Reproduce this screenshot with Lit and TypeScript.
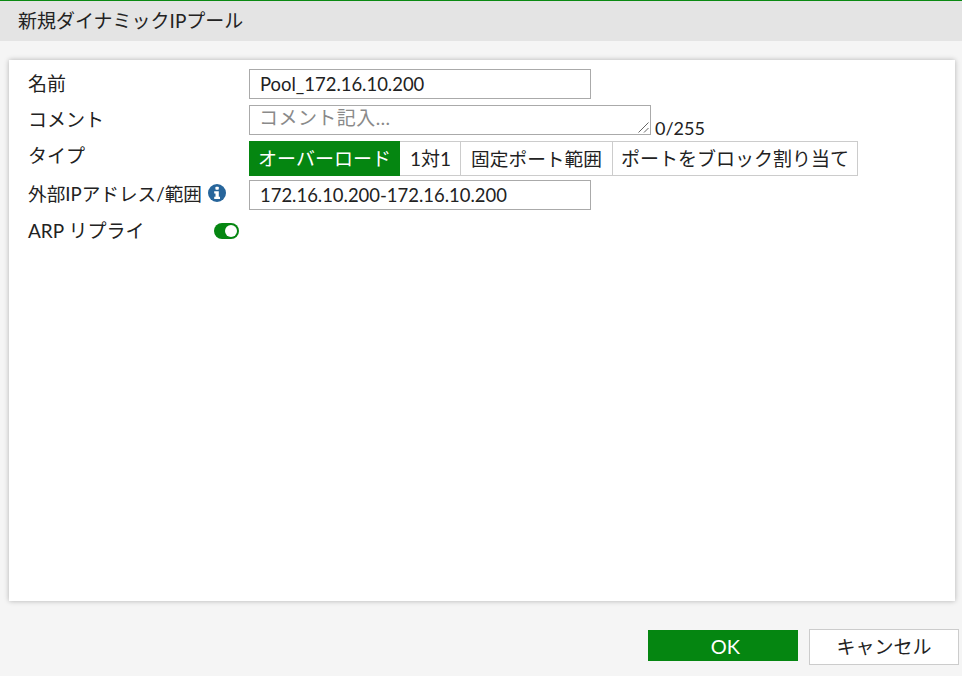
import { LitElement, html, css } from "lit";
import { customElement } from "lit/decorators.js";

@customElement("app-root")
export class AppRoot extends LitElement {
  static styles = css`
    :host {
      display: flex;
      flex-direction: column;
      width: 962px;
      height: 676px;
      box-sizing: border-box;
      background: #f5f5f5;
      color: #222;
      font-family: "Lato", "Noto Sans CJK JP", sans-serif;
      font-size: 19px;
      overflow: hidden;
    }
    .title {
      height: 41px;
      box-sizing: border-box;
      border-top: 1px solid #0a8a12;
      background: #e4e4e4;
      padding: 0 0 1px 18px;
      display: flex;
      align-items: center;
      line-height: 38px;
      flex: none;
    }
    .card {
      margin: 19px 7px 0 9px;
      height: 541px;
      box-sizing: border-box;
      background: #fff;
      box-shadow: 0 0 5px rgba(0, 0, 0, 0.28);
      padding: 9px 19px;
      flex: none;
    }
    .row {
      display: flex;
      align-items: center;
    }
    .label {
      width: 221px;
      flex: none;
      display: flex;
      align-items: center;
      line-height: 30px;
      white-space: nowrap;
    }
    .r1 { height: 30px; margin-bottom: 6px; }
    .r2 { height: 30px; margin-bottom: 6px; align-items: flex-start; }
    .r3 { height: 35px; margin-bottom: 4px; }
    .r3 .label { position: relative; top: -3px; }
    .r4 .label { font-size: 18.65px; position: relative; top: -1px; }
    .r5 { height: 30px; margin-top: 5px; }
    .r5 .label { justify-content: space-between; padding-right: 10px; box-sizing: border-box; }
    input, textarea {
      font: inherit;
      color: inherit;
      box-sizing: border-box;
      background: #fff;
      border: 1px solid #aaa;
      border-radius: 0;
      outline: none;
      margin: 0;
    }
    input {
      width: 342px;
      height: 30px;
      padding: 0 10px;
      font-size: 18.45px;
    }
    .ta { position: relative; width: 402px; height: 30px; flex: none; }
    textarea {
      width: 402px;
      height: 30px;
      padding: 1px 9px 0;
      line-height: 22px;
      display: block;
      resize: none;
    }
    textarea::placeholder { color: #8a8a8a; opacity: 1; letter-spacing: 0.45px; }
    .grip {
      position: absolute;
      right: 2px;
      bottom: 2px;
      width: 11px;
      height: 11px;
      pointer-events: none;
    }
    .count {
      align-self: flex-end;
      margin-left: 4px;
      line-height: 20px;
      position: relative;
      top: 3px;
      font-size: 18px;
    }
    .seg { display: flex; height: 35px; }
    .seg div {
      box-sizing: border-box;
      height: 35px;
      display: flex;
      align-items: center;
      justify-content: center;
      border: 1px solid #ccc;
      border-left: none;
      background: #fff;
      white-space: nowrap;
      padding-bottom: 3px;
    }
    .seg div.on {
      background: #058611;
      border: none;
      color: #fff;
    }
    .seg .fix { font-size: 18.7px; }
    .seg .one { padding-left: 1px; }
    .info { width: 18px; height: 18px; margin-left: 6px; flex: none; position: relative; top: -1px; }
    .toggle {
      width: 25px;
      height: 16px;
      box-sizing: border-box;
      border-radius: 8px;
      background: #058611;
      padding: 2px;
      display: flex;
      justify-content: flex-end;
      flex: none;
    }
    .toggle span {
      width: 12px;
      height: 12px;
      border-radius: 50%;
      background: #fff;
      display: block;
    }
    .footer {
      display: flex;
      align-items: flex-start;
      padding: 28px 3px 0 648px;
      gap: 11px;
    }
    .btn {
      box-sizing: border-box;
      width: 150px;
      display: flex;
      align-items: center;
      justify-content: center;
    }
    .ok {
      height: 31px;
      margin-top: 1px;
      background: #058611;
      color: #fff;
      font-size: 20px;
      padding-left: 5px;
    }
    .cancel {
      height: 36px;
      background: #fff;
      border: 1px solid #ccc;
      padding-bottom: 3px;
    }
  `;

  render() {
    return html`
      <div class="title">新規ダイナミックIPプール</div>
      <div class="card">
        <div class="row r1">
          <div class="label">名前</div>
          <input value="Pool_172.16.10.200" />
        </div>
        <div class="row r2">
          <div class="label">コメント</div>
          <div class="ta">
            <textarea placeholder="コメント記入…"></textarea>
            <svg class="grip" viewBox="0 0 11 11">
              <path d="M0.5 10.5L10.5 0.5M6 10.5L10.5 6" stroke="#666" stroke-width="1" fill="none" />
            </svg>
          </div>
          <span class="count">0/255</span>
        </div>
        <div class="row r3">
          <div class="label">タイプ</div>
          <div class="seg">
            <div class="on" style="width:151px">オーバーロード</div>
            <div class="one" style="width:61px">1対1</div>
            <div class="fix" style="width:152px">固定ポート範囲</div>
            <div style="width:245px">ポートをブロック割り当て</div>
          </div>
        </div>
        <div class="row r1 r4">
          <div class="label">
            外部IPアドレス/範囲
            <svg class="info" viewBox="0 0 18 18">
              <circle cx="9" cy="9" r="9" fill="#27659b" />
              <rect x="7.4" y="2.8" width="3.4" height="3" rx="0.8" fill="#fff" />
              <path d="M6.2 7.2h4.6v5.6h1.2v2.2H6.2v-2.2h1.3V9.4H6.2z" fill="#fff" />
            </svg>
          </div>
          <input value="172.16.10.200-172.16.10.200" />
        </div>
        <div class="row r5">
          <div class="label">
            ARP リプライ
            <div class="toggle"><span></span></div>
          </div>
        </div>
      </div>
      <div class="footer">
        <div class="btn ok">OK</div>
        <div class="btn cancel">キャンセル</div>
      </div>
    `;
  }
}
